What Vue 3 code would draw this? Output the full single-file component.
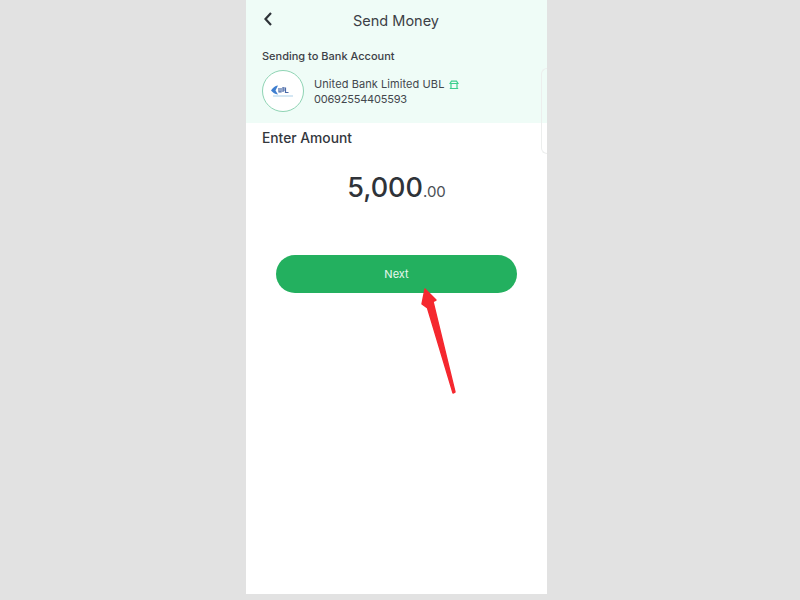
<script setup>
const bank = { name: 'United Bank Limited UBL', account: '00692554405593' }
</script>

<template>
  <div class="page">
    <main class="phone">
      <section class="top">
        <header class="bar">
          <svg class="back" width="10" height="16" viewBox="0 0 10 16" fill="none">
            <path d="M8 2 L2.500 8 L8 14" stroke="#2e3338" stroke-width="2.200" />
          </svg>
          <h1>Send Money</h1>
        </header>
        <p class="label">Sending to Bank Account</p>
        <div class="bank">
          <div class="logo">
            <svg width="30" height="18" viewBox="0 0 30 18" fill="none">
              <path d="M10 3.500 C6 4 4 7 3 8.500 C5 11 7 12 10 12.500 L7.500 8.500 Z" fill="#3f7fd0" />
              <path d="M11 6 v4 h2 v-4 M15 5 v5 M17.500 5.500 v5 h3 M15 6 h2 M15 8 h2" stroke="#4a6aa8" stroke-width="1.200" />
              <path d="M5 14 H25" stroke="#a9cfe8" stroke-width="1" />
            </svg>
          </div>
          <div class="info">
            <div class="name">
              {{ bank.name }}
              <svg class="mini" width="10" height="10" viewBox="0 0 10 10" fill="none">
                <path d="M1 3.500 L2.500 1.200 H7.500 L9 3.500 Z M2 3.500 V8 M8 3.500 V8 M0.800 8.500 H9.200" stroke="#3ccf8e" stroke-width="1.200" />
              </svg>
            </div>
            <div class="account">{{ bank.account }}</div>
          </div>
        </div>
      </section>
      <div class="tab"></div>
      <h2>Enter Amount</h2>
      <div class="amount">5,000<span>.00</span></div>
      <button class="next" type="button">Next</button>
      <svg class="arrow" width="50" height="110" viewBox="0 0 50 110">
        <path d="M15 1 L26 12 L23 13.500 L45 104 L43 105 L17.500 20 L12 16 Z" fill="#f5282f" stroke="#f5282f" stroke-width="1.400" stroke-linejoin="round" />
      </svg>
    </main>
  </div>
</template>

<style>
html, body { margin: 0; background: #e2e2e2; }
</style>

<style scoped>
.page {
  width: 800px;
  height: 600px;
  overflow: hidden;
  background: #e2e2e2;
  display: flex;
  justify-content: center;
  font-family: Inter, "Liberation Sans", sans-serif;
  color: #33373d;
}
.phone {
  position: relative;
  width: 301px;
  height: 594px;
  margin-right: 7px;
  background: #fff;
  box-sizing: border-box;
}
.top {
  height: 123px;
  background: #effcf7;
  padding: 0 16px;
  box-sizing: border-box;
}
.bar {
  position: relative;
  height: 41px;
  display: flex;
  align-items: center;
  justify-content: center;
}
.back { position: absolute; left: 1px; top: 11px; }
h1 {
  margin: 0;
  font-size: 14.500px;
  font-weight: 400;
  color: #3c4046;
  padding-right: 1px;
}
.label {
  margin: 8px 0 0;
  font-size: 11px;
  line-height: 14px;
  font-weight: 500;
  color: #3d4147;
}
.bank {
  margin-top: 7px;
  display: flex;
  align-items: center;
  gap: 10px;
}
.logo {
  width: 42px;
  height: 42px;
  box-sizing: border-box;
  border-radius: 50%;
  border: 1px solid #8fd4b4;
  background: #fff;
  display: flex;
  align-items: center;
  justify-content: center;
}
.info { font-size: 11px; line-height: 15px; color: #43474d; padding-top: 2px; }
.name { display: flex; align-items: center; gap: 5px; letter-spacing: 0.08px; }
.account { letter-spacing: -0.2px; }
.tab {
  position: absolute;
  right: 0;
  top: 68px;
  width: 6px;
  height: 86px;
  box-sizing: border-box;
  border: 1px solid #eceeed;
  border-right: 0;
  border-radius: 6px 0 0 6px;
}
h2 {
  margin: 7px 0 0 16px;
  font-size: 13.800px;
  line-height: 17px;
  font-weight: 500;
  color: #33373d;
}
.amount {
  margin-top: 24px;
  text-align: center;
  font-size: 27px;
  line-height: 34px;
  font-weight: 500;
  color: #2f3339;
}
.amount span { font-size: 15px; font-weight: 400; color: #4a4e54; }
.next {
  display: block;
  width: 241px;
  height: 38px;
  margin: 46px 0 0 30px;
  border: 0;
  border-radius: 19px;
  background: #23b05f;
  color: #e9f8ef;
  font-family: inherit;
  font-size: 11px;
  padding: 0;
}
.arrow { position: absolute; left: 164px; top: 288px; }
</style>
